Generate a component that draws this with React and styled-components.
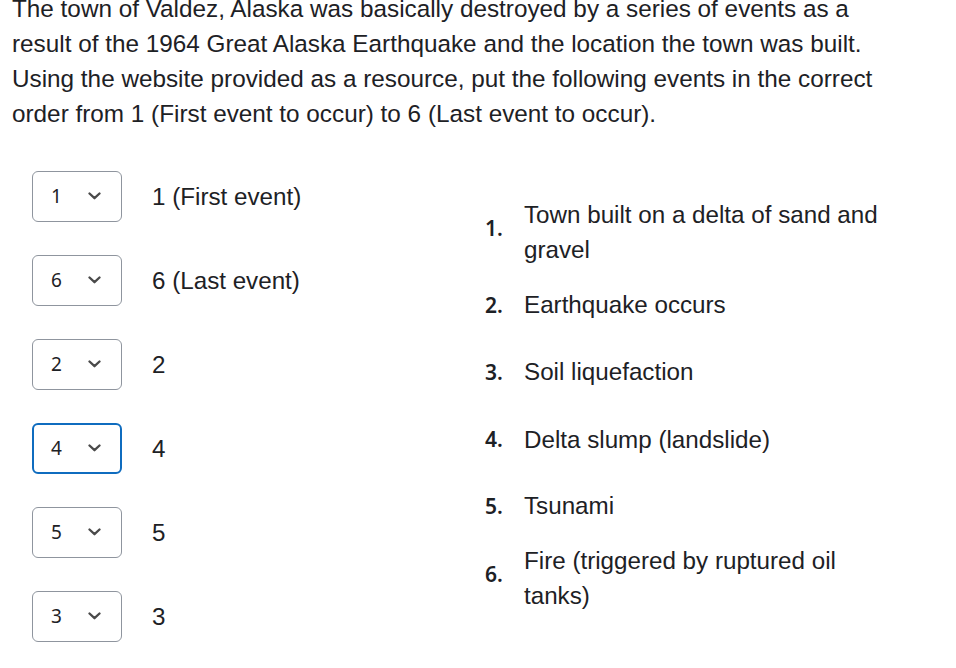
import React from "react";
import styled, { createGlobalStyle } from "styled-components";

const Global = createGlobalStyle`
  html, body { margin: 0; padding: 0; background: #fff; }
  body { font-family: "Liberation Sans", Arial, sans-serif; color: #1d2125; }
`;

const Page = styled.div`
  padding: 0 0 0 12px;
  width: 880px;
`;

const Intro = styled.p`
  margin: -9px 0 0 0;
  font-size: 24.3px;
  line-height: 35px;
  color: #1d2125;
`;

const Columns = styled.div`
  display: flex;
  margin-top: 23px;
`;

const LeftCol = styled.div`
  width: 473px;
  padding-left: 20px;
  box-sizing: border-box;
  display: flex;
  flex-direction: column;
`;

const Row = styled.div`
  height: 84px;
  display: flex;
  align-items: center;
  gap: 30px;
`;

const SelectBox = styled.div`
  box-sizing: border-box;
  width: 90px;
  height: 51px;
  border: ${(p) => (p.$focused ? "2px solid #0f6cbf" : "1px solid #8f959e")};
  border-radius: 6px;
  display: flex;
  align-items: center;
  padding-left: ${(p) => (p.$focused ? "17px" : "18px")};
  font-family: "Noto Sans", "Open Sans", sans-serif;
  font-size: 19px;
  color: #1d2125;
`;

const SelectValue = styled.span`
  width: 37px;
`;

const Chevron = styled.svg`
  width: 13px;
  height: 8px;
  display: block;
`;

const Label = styled.span`
  font-size: 24.2px;
  line-height: 35px;
  color: #1d2125;
`;

const RightCol = styled.ol`
  list-style: none;
  margin: 0;
  padding: 43px 0 0 0;
  flex: 1;
`;

const Item = styled.li`
  display: flex;
  align-items: center;
  min-height: 67px;
  padding: ${(p) => p.$pad || "0"};
  box-sizing: border-box;
`;

const Num = styled.span`
  width: 39px;
  flex: none;
  padding-bottom: ${(p) => (p.$multi ? "8px" : "0")};
  font-family: "Noto Sans", "Open Sans", sans-serif;
  font-weight: 600;
  font-size: 21px;
  color: #1d2125;
`;

const ItemText = styled.span`
  max-width: 366px;
  font-size: 24.2px;
  line-height: 35px;
  color: #1d2125;
`;

const rows = [
  { v: "1", label: "1 (First event)" },
  { v: "6", label: "6 (Last event)" },
  { v: "2", label: "2" },
  { v: "4", label: "4", focused: true },
  { v: "5", label: "5" },
  { v: "3", label: "3" },
];

const items = [
  { t: "Town built on a delta of sand and gravel", multi: true, pad: "0 0 4px" },
  { t: "Earthquake occurs" },
  { t: "Soil liquefaction" },
  { t: "Delta slump (landslide)", pad: "1px 0 0" },
  { t: "Tsunami" },
  { t: "Fire (triggered by ruptured oil tanks)", multi: true, pad: "4px 0 0" },
];

export default function App() {
  return (
    <>
      <Global />
      <Page>
        <Intro>
          The town of Valdez, Alaska was basically destroyed by a series of events as a
          result of the 1964 Great Alaska Earthquake and the location the town was built.
          Using the website provided as a resource, put the following events in the correct
          order from 1 (First event to occur) to 6 (Last event to occur).
        </Intro>
        <Columns>
          <LeftCol>
            {rows.map((r, i) => (
              <Row key={i}>
                <SelectBox $focused={r.focused}>
                  <SelectValue>{r.v}</SelectValue>
                  <Chevron viewBox="0 0 13 8">
                    <polyline
                      points="1.5,1.5 6.5,6.2 11.5,1.5"
                      fill="none"
                      stroke="#4a4a4a"
                      strokeWidth="2.3"
                      strokeLinecap="round"
                      strokeLinejoin="round"
                    />
                  </Chevron>
                </SelectBox>
                <Label>{r.label}</Label>
              </Row>
            ))}
          </LeftCol>
          <RightCol>
            {items.map((it, i) => (
              <Item key={i} $pad={it.pad}>
                <Num $multi={it.multi}>{i + 1}.</Num>
                <ItemText>{it.t}</ItemText>
              </Item>
            ))}
          </RightCol>
        </Columns>
      </Page>
    </>
  );
}
